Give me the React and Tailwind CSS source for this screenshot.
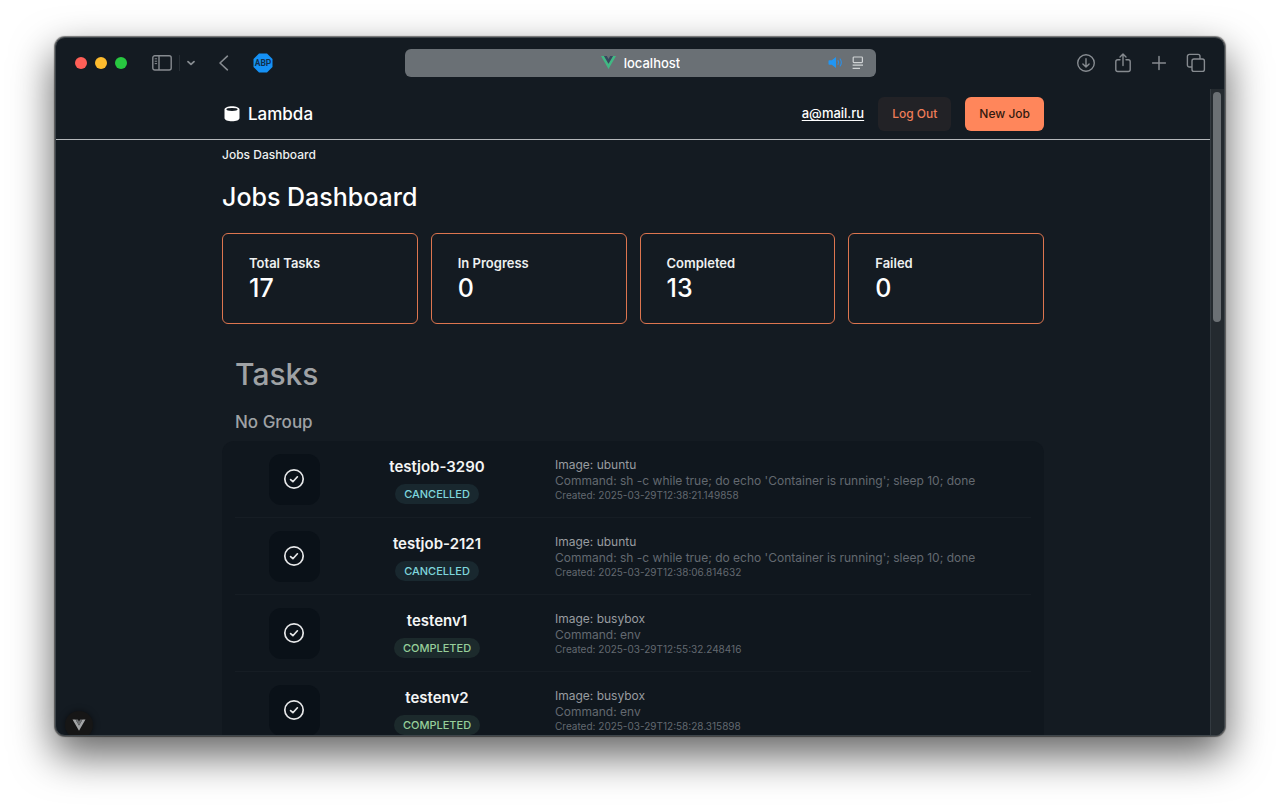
import React from "react";

const stats = [
  { label: "Total Tasks", value: 17 },
  { label: "In Progress", value: 0 },
  { label: "Completed", value: 13 },
  { label: "Failed", value: 0 },
];

const loop = "sh -c while true; do echo 'Container is running'; sleep 10; done";

const tasks = [
  { name: "testjob-3290", status: "CANCELLED", image: "ubuntu", command: loop, created: "2025-03-29T12:38:21.149858" },
  { name: "testjob-2121", status: "CANCELLED", image: "ubuntu", command: loop, created: "2025-03-29T12:38:06.814632" },
  { name: "testenv1", status: "COMPLETED", image: "busybox", command: "env", created: "2025-03-29T12:55:32.248416" },
  { name: "testenv2", status: "COMPLETED", image: "busybox", command: "env", created: "2025-03-29T12:58:28.315898" },
];

const statusStyles = {
  CANCELLED: "bg-[#19282f] text-[#7fd6dd]",
  COMPLETED: "bg-[#1c2a2c] text-[#97cf9a]",
};

function Toolbar() {
  return (
    <div className="grid h-[51px] shrink-0 grid-cols-[1fr_471px_1fr] items-center pr-[18px] pb-[2px] pl-[19px] text-[#868b90]">
      <div className="flex items-center">
        <div className="flex gap-2">
          <button aria-label="Close window" className="size-3 rounded-full bg-[#ff5f57]" />
          <button aria-label="Minimize window" className="size-3 rounded-full bg-[#febc2e]" />
          <button aria-label="Zoom window" className="size-3 rounded-full bg-[#28c840]" />
        </div>
        <button aria-label="Show sidebar" className="ml-[25px]">
          <svg width="20" height="16" viewBox="0 0 20 16" fill="none" stroke="currentColor" strokeWidth="1.4">
            <rect x="0.8" y="0.8" width="18.4" height="14.2" rx="2" />
            <path d="M7 1v14" />
            <path d="M2.7 3.8h2.4M2.7 6.2h2.4M2.7 8.6h2.4" strokeWidth="1" />
          </svg>
        </button>
        <span className="ml-[7px] h-4 w-px bg-[#262d34]" />
        <button aria-label="Tab groups" className="ml-[6px]">
          <svg width="10" height="8" viewBox="0 0 10 8" fill="none" stroke="currentColor" strokeWidth="1.8" strokeLinecap="round" strokeLinejoin="round">
            <path d="M2 2.6l3 2.8 3-2.8" />
          </svg>
        </button>
        <button aria-label="Back" className="ml-[22px]">
          <svg width="12" height="16" viewBox="0 0 12 16" fill="none" stroke="currentColor" strokeWidth="1.6" strokeLinecap="round" strokeLinejoin="round">
            <path d="M9.4 1.2L2 8l7.4 6.8" />
          </svg>
        </button>
        <button aria-label="Ad blocker" className="ml-[23px]">
          <svg width="20" height="20" viewBox="0 0 20 20">
            <path d="M6 0.5h8L19.5 6v8L14 19.5H6L0.5 14V6z" fill="#1591f5" />
            <text x="10" y="13" textAnchor="middle" fontSize="8.5" fontWeight="700" fontFamily="Roboto, sans-serif" fill="#10304e">ABP</text>
          </svg>
        </button>
      </div>

      <div className="grid h-7 grid-cols-[1fr_auto_1fr] items-center rounded-md bg-[#6a7075] px-3">
        <span />
        <label className="flex items-center gap-2">
          <svg width="15" height="13" viewBox="0 0 15 13" aria-hidden="true">
            <path d="M0 0h3l4.5 7.8L12 0h3L7.5 13z" fill="#41b883" />
            <path d="M3 0h2.8l1.7 3L9.2 0H12L7.5 7.8z" fill="#35495e" />
          </svg>
          <input aria-label="Address" defaultValue="localhost" className="field-sizing-content bg-transparent font-['Inter',sans-serif] text-[13px] leading-5 font-medium text-white outline-none" />
        </label>
        <div className="flex items-center justify-end gap-2">
          <button aria-label="Mute tab">
            <svg width="16" height="13" viewBox="0 0 16 13" fill="none" stroke="#2b8fe6" strokeWidth="1.1" strokeLinecap="round">
              <path d="M1.2 4.3h2.6L8 1v11L3.8 8.7H1.2a.7.7 0 0 1-.7-.7V5a.7.7 0 0 1 .7-.7z" fill="#2196f3" stroke="none" />
              <path d="M10 4.6c.8 1.2.8 2.6 0 3.8M12.2 3c1.4 2.2 1.4 4.8 0 7" />
            </svg>
          </button>
          <button aria-label="Reader view">
            <svg width="12" height="14" viewBox="0 0 12 14" fill="none" stroke="#d0d3d5" strokeWidth="1.2">
              <rect x="1.2" y="1" width="9.2" height="5.6" rx="0.8" />
              <path d="M0.6 9.2h10.4M0.6 12.4h7.4" />
            </svg>
          </button>
        </div>
      </div>

      <div className="flex items-center justify-end gap-[18px]">
        <button aria-label="Downloads">
          <svg width="20" height="20" viewBox="0 0 20 20" fill="none" stroke="currentColor" strokeWidth="1.4" strokeLinecap="round" strokeLinejoin="round">
            <circle cx="10" cy="10" r="8.3" />
            <path d="M10 5.8v8M6.9 10.9l3.1 3.1 3.1-3.1" />
          </svg>
        </button>
        <button aria-label="Share">
          <svg width="18" height="20" viewBox="0 0 18 20" fill="none" stroke="currentColor" strokeWidth="1.4" strokeLinecap="round" strokeLinejoin="round">
            <path d="M6 6.8H3.8A2 2 0 0 0 1.8 8.8v7.7a2 2 0 0 0 2 2h10.4a2 2 0 0 0 2-2V8.8a2 2 0 0 0-2-2H12" />
            <path d="M9 12.5V1.2M6 4l3-3 3 3" />
          </svg>
        </button>
        <button aria-label="New tab">
          <svg width="18" height="18" viewBox="0 0 18 18" fill="none" stroke="currentColor" strokeWidth="1.5" strokeLinecap="round">
            <path d="M9 2.6v12.8M2.6 9h12.8" />
          </svg>
        </button>
        <button aria-label="Show tabs">
          <svg width="20" height="20" viewBox="0 0 20 20" fill="none" stroke="currentColor" strokeWidth="1.4" strokeLinejoin="round">
            <rect x="6" y="6" width="12.4" height="12.4" rx="2" />
            <path d="M6 14H3.4a2 2 0 0 1-2-2V3.4a2 2 0 0 1 2-2H12a2 2 0 0 1 2 2V6" />
          </svg>
        </button>
      </div>
    </div>
  );
}

function Header() {
  return (
    <header className="border-b border-[#b4b7ba]">
      <div className="mx-auto flex h-[50px] max-w-[822px] items-center">
        <a href="#home" className="flex items-center gap-1.5 text-[17px] leading-6 font-medium text-white">
          <svg width="20" height="18" viewBox="0 0 20 18" aria-hidden="true">
            <path d="M2.5 4.5C2.5 2.5 5.8 1.2 10 1.2s7.5 1.3 7.5 3.3v8.4c0 2-3.3 3.3-7.5 3.3s-7.5-1.3-7.5-3.3z" fill="#fff" />
            <ellipse cx="10" cy="4.5" rx="5.6" ry="1.4" fill="#141b22" />
          </svg>
          Lambda
        </a>
        <div className="ml-auto flex items-center gap-[14px] text-[12px] font-medium">
          <a href="mailto:a@mail.ru" className="text-[13px] text-white underline underline-offset-2">a@mail.ru</a>
          <button className="h-[34px] rounded-md bg-[#222226] px-[14px] text-[#ef7d58]">Log Out</button>
          <button className="h-[34px] rounded-md bg-[#ff865b] px-[14px] text-[#33190f]">New Job</button>
        </div>
      </div>
    </header>
  );
}

function TaskRow({ task }) {
  return (
    <li className="grid h-[77px] grid-cols-[118px_168px_minmax(0,1fr)] items-center border-b border-[#161d24]">
      <div className="mx-auto flex size-[51px] items-center justify-center rounded-xl bg-[#0a1118]">
        <svg width="24" height="24" viewBox="0 0 24 24" fill="none" stroke="#e6e7e8" strokeWidth="1.7" strokeLinecap="round" strokeLinejoin="round" aria-hidden="true">
          <circle cx="12" cy="12" r="9.2" />
          <path d="M8.6 12.6l2.3 2.1 4.5-4.9" />
        </svg>
      </div>
      <div className="flex flex-col items-center gap-[7px] pt-[3px]">
        <h4 className="text-[15px] leading-5 font-semibold text-[#f4f5f5]">{task.name}</h4>
        <span className={`rounded-full px-[9px] text-[11px] leading-5 font-medium ${statusStyles[task.status]}`}>{task.status}</span>
      </div>
      <div className="pl-[34px] text-[12px] leading-4 whitespace-nowrap text-[#636970]">
        <p className="text-[#989ca0]">Image: {task.image}</p>
        <p>Command: {task.command}</p>
        <p className="text-[10px] leading-[13px]">Created: {task.created}</p>
      </div>
    </li>
  );
}

export default function App() {
  return (
    <div className="flex h-screen bg-white px-[55px] pt-[37px] pb-[73px] font-['Inter',sans-serif]">
      <div className="relative flex min-w-0 flex-1 flex-col overflow-hidden rounded-[10px] border border-[#3e454a] bg-[#141b22] shadow-[0_0_1px_1px_rgba(0,0,0,0.5),0_18px_40px_2px_rgba(0,0,0,0.6)]">
        <Toolbar />
        <div className="flex min-h-0 flex-1">
          <div className="min-w-0 flex-1 overflow-hidden">
            <Header />
            <main className="mx-auto max-w-[822px]">
              <nav aria-label="Breadcrumb" className="pt-[7px] text-[12px] leading-4 font-medium text-[#eef0f0]">
                <a href="#jobs">Jobs Dashboard</a>
              </nav>
              <h1 className="mt-[18px] text-[25px] leading-8 font-medium text-white">Jobs Dashboard</h1>

              <dl className="mt-5 grid grid-cols-4 gap-[13px]">
                {stats.map((stat) => (
                  <div key={stat.label} className="rounded-md border border-[#dd754f] px-[26px] py-[19px]">
                    <dt className="text-[13px] leading-5 font-semibold text-[#eef0f0]">{stat.label}</dt>
                    <dd className="text-[25px] leading-[31px] font-medium text-white">{stat.value}</dd>
                  </div>
                ))}
              </dl>

              <section className="mt-8">
                <h2 className="px-[13px] text-[30px] leading-9 font-medium text-[#9fa2a5]">Tasks</h2>
                <h3 className="mt-[18px] px-[13px] text-[17px] leading-6 font-medium text-[#9fa2a5]">No Group</h3>
                <ul className="mt-[7px] rounded-xl bg-[#10171e] px-[13px]">
                  {tasks.map((task) => (
                    <TaskRow key={task.name} task={task} />
                  ))}
                </ul>
              </section>
            </main>
          </div>
          <div className="w-[14px] shrink-0 border-l border-[#333a40] bg-[#242a2f] pt-[3px] pr-[3px] pl-[2px]">
            <div className="h-[230px] w-2 rounded-full bg-[#6b7074]" />
          </div>
        </div>
        <button aria-label="Toggle devtools" className="absolute -bottom-1 left-[9px] flex size-7 items-center justify-center rounded-full bg-[#161616] shadow-[0_0_6px_rgba(0,0,0,0.5)]">
          <svg width="14" height="12" viewBox="0 0 14 12" aria-hidden="true">
            <path d="M0.5 0.5h3L7 6.6l3.5-6.1h3L7 11.7z" fill="#a3a5a6" />
            <path d="M3.5 0.5h2.3L7 2.6 8.2 0.5h2.3L7 6.6z" fill="#6e7072" />
          </svg>
        </button>
      </div>
    </div>
  );
}
